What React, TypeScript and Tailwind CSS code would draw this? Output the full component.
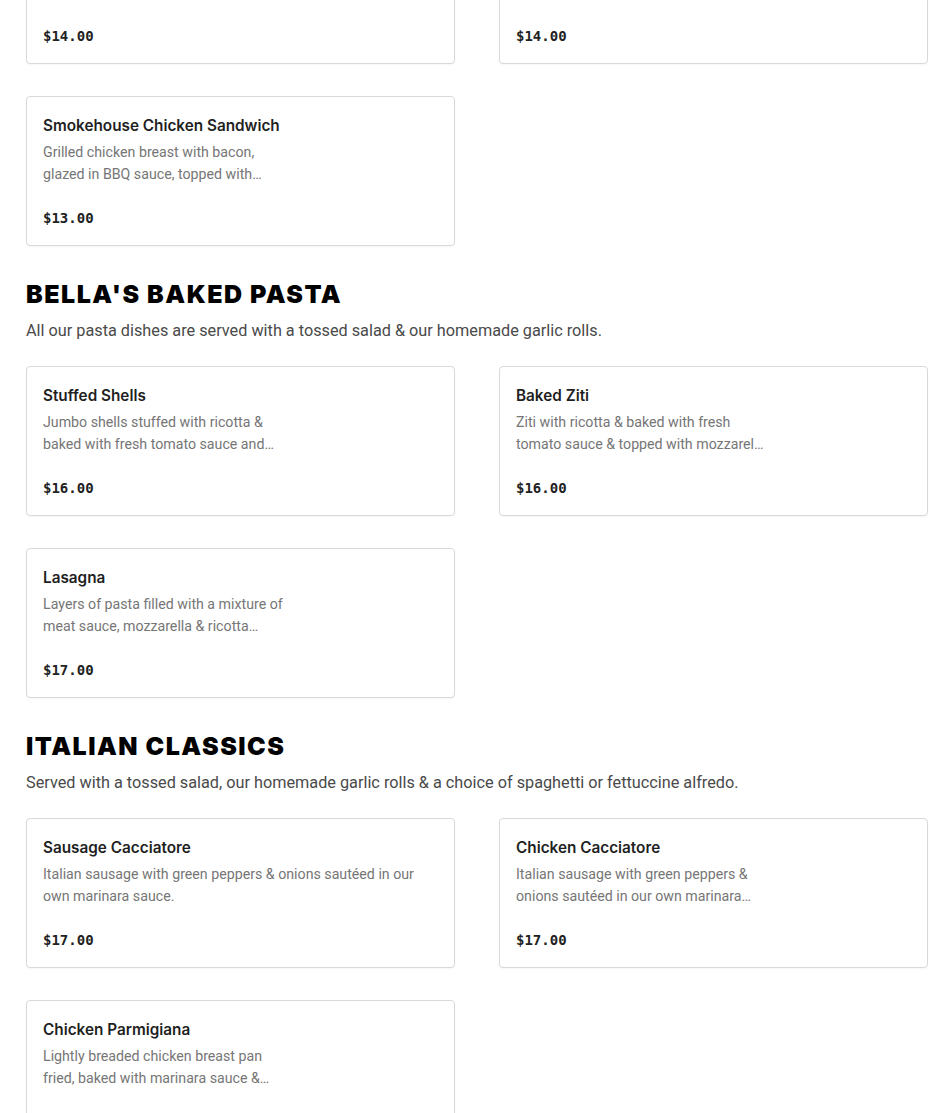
type Item = {
  name: string;
  desc: string;
  price: string;
  wide?: boolean;
};

type Section = {
  title?: string;
  subtitle?: string;
  items: Item[];
};

const sections: Section[] = [
  {
    items: [
      {
        name: "Italian Sausage Sandwich",
        desc: "Grilled Italian sausage with peppers & onions, topped with melted provolone.",
        price: "$14.00",
      },
      {
        name: "Meatball Parmigiana Sandwich",
        desc: "Homemade meatballs topped with marinara sauce & melted mozzarella cheese.",
        price: "$14.00",
      },
      {
        name: "Smokehouse Chicken Sandwich",
        desc: "Grilled chicken breast with bacon, glazed in BBQ sauce, topped with cheddar cheese.",
        price: "$13.00",
      },
    ],
  },
  {
    title: "BELLA'S BAKED PASTA",
    subtitle:
      "All our pasta dishes are served with a tossed salad & our homemade garlic rolls.",
    items: [
      {
        name: "Stuffed Shells",
        desc: "Jumbo shells stuffed with ricotta & baked with fresh tomato sauce and mozzarella cheese.",
        price: "$16.00",
      },
      {
        name: "Baked Ziti",
        desc: "Ziti with ricotta & baked with fresh tomato sauce & topped with mozzarella cheese.",
        price: "$16.00",
      },
      {
        name: "Lasagna",
        desc: "Layers of pasta filled with a mixture of meat sauce, mozzarella & ricotta cheese.",
        price: "$17.00",
      },
    ],
  },
  {
    title: "ITALIAN CLASSICS",
    subtitle:
      "Served with a tossed salad, our homemade garlic rolls & a choice of spaghetti or fettuccine alfredo.",
    items: [
      {
        name: "Sausage Cacciatore",
        desc: "Italian sausage with green peppers & onions sautéed in our own marinara sauce.",
        price: "$17.00",
        wide: true,
      },
      {
        name: "Chicken Cacciatore",
        desc: "Italian sausage with green peppers & onions sautéed in our own marinara sauce.",
        price: "$17.00",
      },
      {
        name: "Chicken Parmigiana",
        desc: "Lightly breaded chicken breast pan fried, baked with marinara sauce & mozzarella cheese.",
        price: "$18.00",
      },
    ],
  },
];

function MenuCard({ item }: { item: Item }) {
  return (
    <div className="rounded-[4px] border border-[#d9d9d9] bg-white px-4 pt-[17px] pb-[17px] shadow-[0_1px_2px_rgba(0,0,0,0.04)]">
      <h3 className="text-[15.3px] font-semibold leading-[23px] text-[#1f1f1f] font-['Inter',sans-serif]">
        {item.name}
      </h3>
      <p
        className={`mt-1 line-clamp-2 text-[14.2px] leading-[22px] text-[#767676] font-['Roboto',sans-serif] ${
          item.wide ? "max-w-[385px]" : "max-w-[250px]"
        }`}
      >
        {item.desc}
      </p>
      <p className="mt-[23px] text-[14px] font-bold leading-5 text-[#222] font-['DejaVu_Sans_Mono',monospace]">
        {item.price}
      </p>
    </div>
  );
}

export default function App() {
  return (
    <div className="min-h-screen overflow-hidden bg-white">
      <div className="mt-[-86px] pl-[26px] pr-[22px]">
        {sections.map((section, i) => (
          <section key={i} className={i > 0 ? "mt-8" : ""}>
            {section.title && (
              <div className="mb-[23px]">
                <h2 className="text-[25px] font-black leading-8 tracking-[0.06em] text-black font-['Inter',sans-serif]">
                  {section.title}
                </h2>
                <p className="mt-[9px] text-[16.25px] leading-6 text-[#4a4a4a] font-['Roboto',sans-serif]">
                  {section.subtitle}
                </p>
              </div>
            )}
            <div className="grid grid-cols-2 gap-x-[44px] gap-y-8">
              {section.items.map((item) => (
                <MenuCard key={item.name} item={item} />
              ))}
            </div>
          </section>
        ))}
      </div>
    </div>
  );
}
